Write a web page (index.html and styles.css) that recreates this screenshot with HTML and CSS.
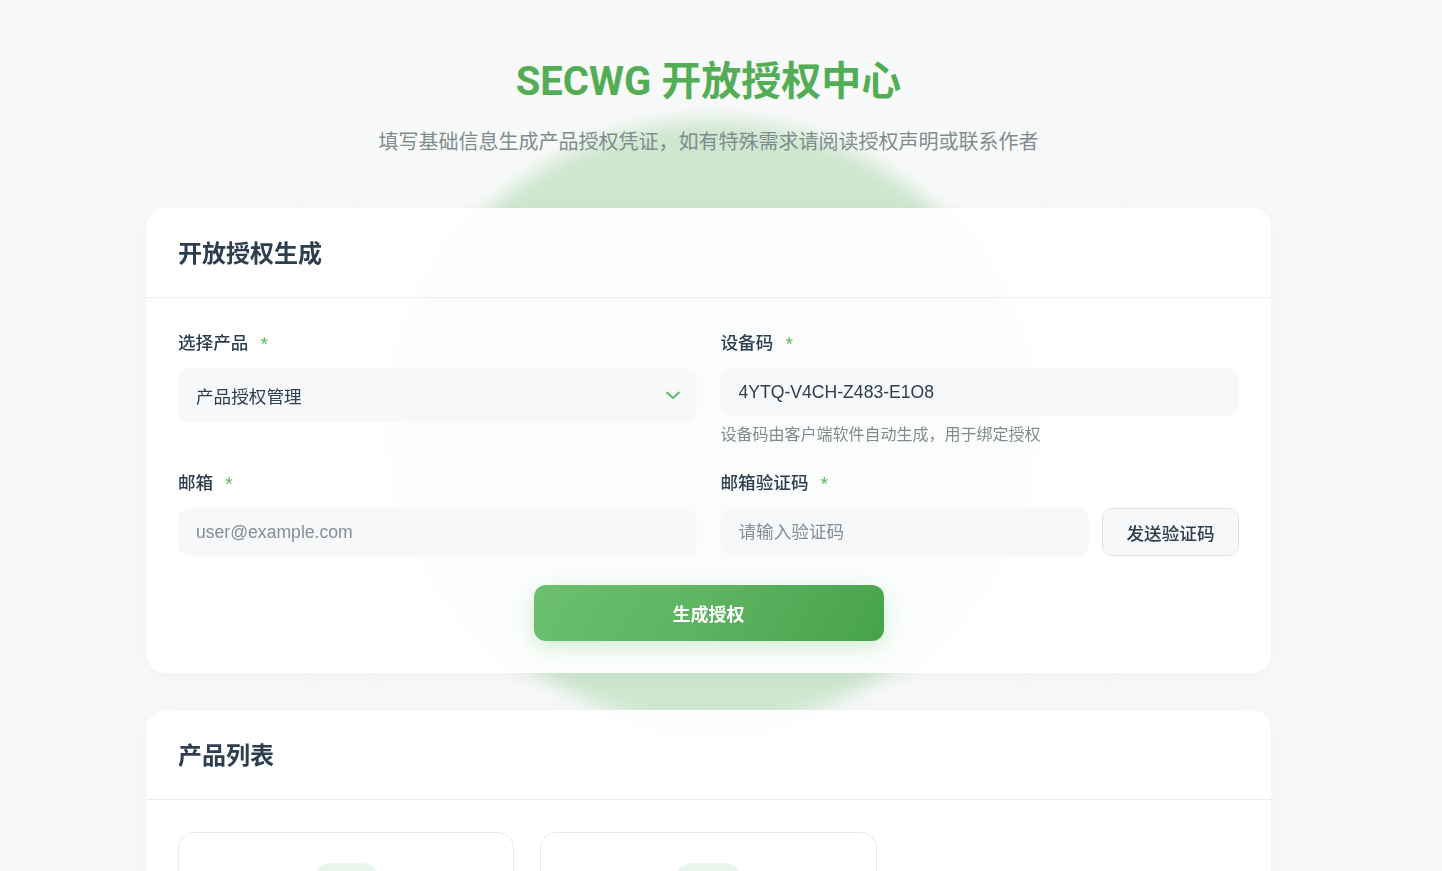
FILE: index.html
```html
<!DOCTYPE html>
<html lang="zh-CN">
  <head>
    <meta charset="utf-8">
    <title>SECWG 开放授权中心</title>
    <link rel="stylesheet" href="styles.css">
  </head>
  <body>
    <!-- background decoration -->
    <div class="decor">
      <div class="blob"></div>
      <div class="ring ring-a"></div>
      <div class="ring ring-b"></div>
    </div>

    <main class="page">
      <header class="hero">
        <h1>SECWG 开放授权中心</h1>
        <p>填写基础信息生成产品授权凭证，如有特殊需求请阅读授权声明或联系作者</p>
      </header>

      <section class="card">
        <div class="card-header">
          <h2>开放授权生成</h2>
        </div>
        <form class="card-body">
          <div class="form-grid">
            <div class="field">
              <label>选择产品 <span class="req">*</span></label>
              <div class="select">
                <span>产品授权管理</span>
                <svg width="16" height="16" viewBox="0 0 16 16">
                  <path d="M2 5.5 L8 11 L14 5.5" fill="none" stroke="#5cb85f" stroke-width="1.8" stroke-linecap="round" stroke-linejoin="round"/>
                </svg>
              </div>
            </div>
            <div class="field">
              <label>设备码 <span class="req">*</span></label>
              <input class="input" value="4YTQ-V4CH-Z483-E1O8">
              <small class="hint">设备码由客户端软件自动生成，用于绑定授权</small>
            </div>
            <div class="field">
              <label>邮箱 <span class="req">*</span></label>
              <input class="input" placeholder="user@example.com">
            </div>
            <div class="field">
              <label>邮箱验证码 <span class="req">*</span></label>
              <div class="code-row">
                <input class="input" placeholder="请输入验证码">
                <button type="button" class="btn-send">发送验证码</button>
              </div>
            </div>
          </div>
          <div class="actions">
            <button type="button" class="btn-primary">生成授权</button>
          </div>
        </form>
      </section>

      <section class="card">
        <div class="card-header">
          <h2>产品列表</h2>
        </div>
        <div class="card-body">
          <div class="product-grid">
            <div class="product">
              <div class="product-icon"></div>
              <h3>产品授权管理</h3>
              <p>开放授权</p>
            </div>
            <div class="product">
              <div class="product-icon"></div>
              <h3>SECWG 工具</h3>
              <p>开放授权</p>
            </div>
          </div>
        </div>
      </section>
    </main>
  </body>
</html>
```

FILE: styles.css
```css
html, body {
  margin: 0;
  padding: 0;
}

body {
  background: #f8f9f9;
  font-family: Roboto, "Noto Sans CJK SC", sans-serif;
  color: #2c3e50;
  overflow-x: hidden;
  padding-right: 25px;
}

/* background */
.decor {
  position: absolute;
  top: 0;
  left: 0;
  right: 25px;
  height: 1200px;
  overflow: hidden;
  z-index: 0;
  pointer-events: none;
}

.blob {
  position: absolute;
  left: 50%;
  top: 120px;
  width: 630px;
  height: 605px;
  margin-left: -312px;
  border-radius: 50%;
  background: rgba(76, 175, 80, 0.24);
  filter: blur(9px);
}

.ring {
  position: absolute;
  border-radius: 50%;
  border: 1px solid rgba(0, 0, 0, 0.022);
}

.ring-a {
  left: 50%;
  top: 20px;
  width: 820px;
  height: 820px;
  margin-left: -420px;
}

.ring-b {
  left: 50%;
  top: -40px;
  width: 940px;
  height: 940px;
  margin-left: -470px;
}

.page {
  position: relative;
  z-index: 1;
  width: 1125px;
  margin: 0 auto;
  padding-top: 58px;
}

.hero {
  text-align: center;
  margin-bottom: 50px;
}

.hero h1 {
  margin: 0;
  font-size: 40px;
  line-height: 48px;
  font-weight: 700;
  color: #52ad55;
}

.hero p {
  margin: 21px 0 0;
  font-size: 20px;
  line-height: 31px;
  color: #7f8c8d;
}

/* cards */
.card {
  background: rgba(255, 255, 255, 0.9);
  backdrop-filter: blur(10px);
  border-radius: 20px;
  box-shadow: 0 4px 24px rgba(0, 0, 0, 0.04);
  margin-bottom: 37px;
}

.card-header {
  padding: 30px 32px 27px;
  border-bottom: 1px solid #ebeded;
}

.card-header h2 {
  margin: 0;
  font-size: 24px;
  line-height: 32px;
  font-weight: 700;
  color: #2c3e50;
}

.card-body {
  padding: 32px;
}

.form-grid {
  display: grid;
  grid-template-columns: 1fr 1fr;
  column-gap: 24px;
  row-gap: 24px;
}

.field {
  display: flex;
  flex-direction: column;
}

.field label {
  font-size: 17.6px;
  line-height: 26px;
  font-weight: 500;
  color: #2c3e50;
  margin-bottom: 11px;
}

.req {
  color: #66bb6a;
  font-size: 16px;
  margin-left: 8px;
}

.select {
  height: 54px;
  box-sizing: border-box;
  padding: 0 16px 0 18px;
  background: #f6f8f9;
  border-radius: 12px;
  display: flex;
  align-items: center;
  justify-content: space-between;
  font-size: 17.6px;
  color: #2c3e50;
}

.input {
  height: 48px;
  box-sizing: border-box;
  padding: 0 18px;
  background: #f6f8f9;
  border: none;
  border-radius: 12px;
  font-family: "Liberation Sans", "Noto Sans CJK SC", sans-serif;
  font-size: 17.6px;
  color: #2c3e50;
  outline: none;
  min-width: 0;
}

.input::placeholder {
  color: #868d93;
}

.hint {
  margin-top: 8px;
  font-size: 16px;
  line-height: 22px;
  color: #7f8c8d;
}

.code-row {
  display: flex;
  gap: 13px;
}

.code-row .input {
  flex: 1;
}

.btn-send {
  width: 137px;
  height: 48px;
  flex-shrink: 0;
  background: #f6f8f9;
  border: 1px solid #dfe3e7;
  border-radius: 10px;
  font-family: Roboto, "Noto Sans CJK SC", sans-serif;
  font-size: 17.6px;
  font-weight: 500;
  color: #2c3e50;
}

.actions {
  display: flex;
  justify-content: center;
  margin-top: 29px;
}

.btn-primary {
  width: 350px;
  height: 56px;
  border: none;
  border-radius: 12px;
  background: linear-gradient(120deg, #6cc06f 0%, #5cb360 50%, #47a34a 100%);
  box-shadow: 0 6px 18px rgba(76, 175, 80, 0.22);
  color: #fff;
  font-family: Roboto, "Noto Sans CJK SC", sans-serif;
  font-size: 18px;
  font-weight: 700;
}

/* product list */
.product-grid {
  display: grid;
  grid-template-columns: repeat(3, 1fr);
  gap: 26px;
}

.product {
  border: 1px solid #e6e9ec;
  border-radius: 16px;
  padding: 30px 24px;
  background: #fff;
  text-align: center;
}

.product-icon {
  width: 67px;
  height: 64px;
  margin: 0 auto 16px;
  border-radius: 18px;
  background: #e9f5ea;
}

.product h3 {
  margin: 0 0 8px;
  font-size: 18px;
}

.product p {
  margin: 0;
  color: #7f8c8d;
}
```
